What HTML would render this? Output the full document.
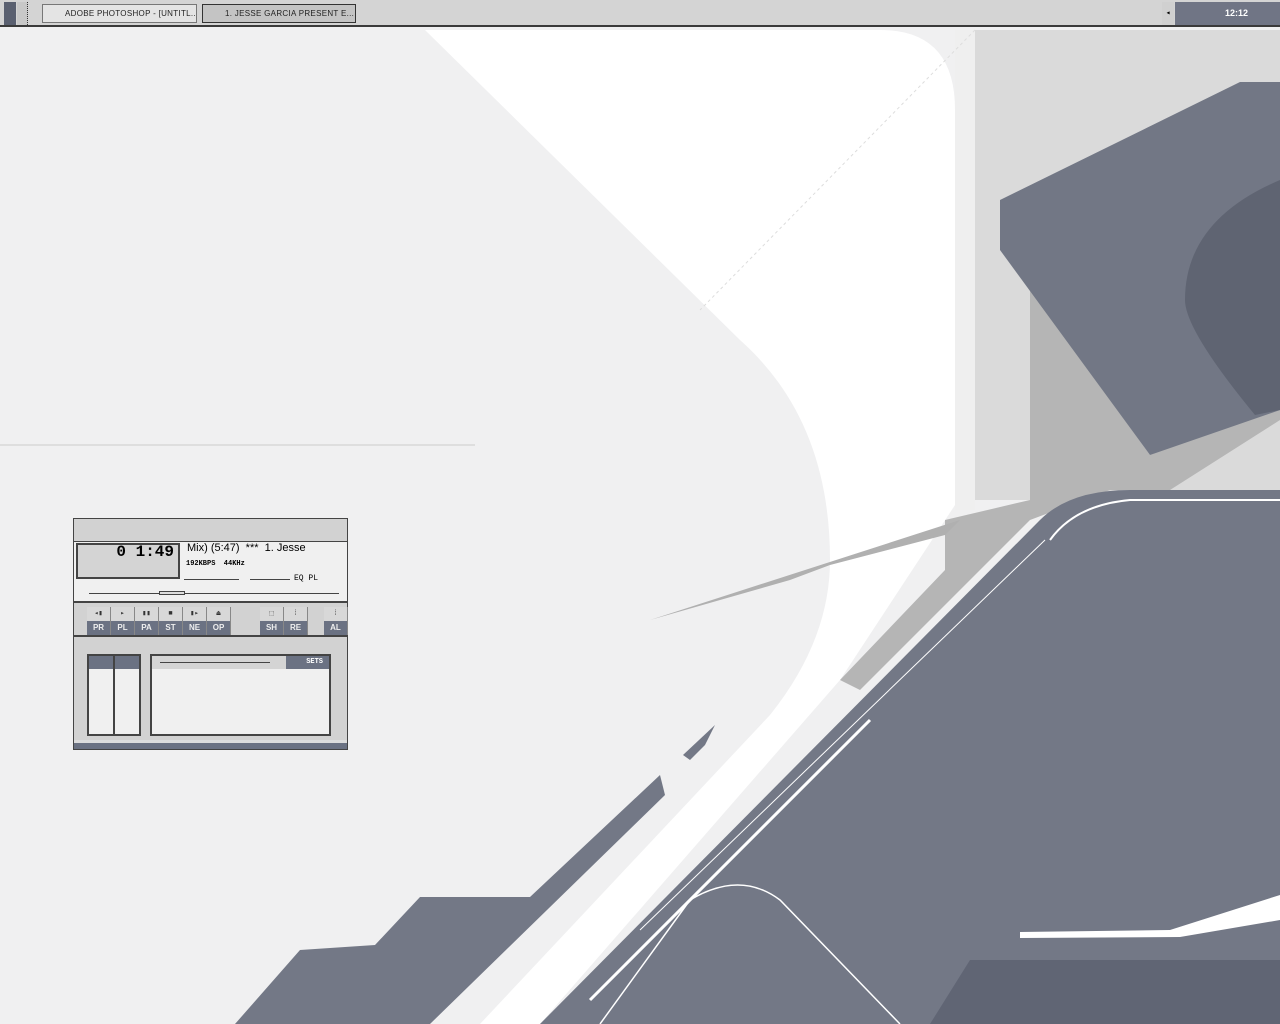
<!DOCTYPE html>
<html><head><style>
*{margin:0;padding:0;box-sizing:border-box}
body{width:1280px;height:1024px;overflow:hidden;background:#f0f0f1;font-family:"Liberation Mono",monospace;position:relative}
#tb{position:absolute;left:0;top:0;width:1280px;height:27px;background:#d4d4d4;border-bottom:2px solid #3a3a3a}
.tbtn{position:absolute;top:4px;height:19px;border:1px solid #777;background:#e4e4e4;font-size:8px;line-height:17px;padding-left:22px;color:#222;letter-spacing:.3px;font-family:"Liberation Sans",sans-serif;white-space:nowrap;overflow:hidden}
#wa{position:absolute;left:73px;top:518px;width:275px;height:232px;background:#d2d2d2;border:1px solid #444}
.d{position:absolute}
.btn{position:absolute;width:24px;height:14px;background:#6b7283;color:#eee;font-size:8px;text-align:center;line-height:14px;font-family:"Liberation Sans",sans-serif;font-weight:bold;border-right:1px solid #888}
.ic{position:absolute;width:24px;height:14px;background:#d8d8d8;border-right:1px solid #888;font-size:7px;text-align:center;line-height:14px;color:#333}
</style></head><body>
<svg width="1280" height="1024" style="position:absolute;left:0;top:0">
<rect x="975" y="30" width="305" height="470" fill="#dadada"/>
<rect x="955" y="30" width="20" height="480" fill="#efefef"/>
<path d="M425,30 L880,30 Q955,30 955,110 L955,505 L840,680 L540,1024 L480,1024 L770,715 Q830,640 830,560 Q830,420 740,340 Z" fill="#fff"/>
<path d="M0,445 L475,445" stroke="#ccc" stroke-width="1"/>
<path d="M1015,270 L1030,280 L1030,500 L945,520 L945,570 L840,680 L860,690 L1030,520 L1110,490 L1170,490 L1280,420 L1280,400 L1150,455 L1060,330 Z" fill="#b5b5b5"/>
<path d="M650,620 L960,520 L945,535 L830,565 L790,580 Z" fill="#b0b0b0"/>
<path d="M1000,200 L1240,82 L1280,82 L1280,410 L1150,455 L1000,250 Z" fill="#727785"/>
<path d="M1185,300 Q1185,220 1280,180 L1280,410 L1255,415 Q1185,330 1185,300 Z" fill="#5f6472"/>
<path d="M1130,490 L1280,490 L1280,1024 L540,1024 L1040,520 Q1070,490 1130,490 Z" fill="#737886"/>
<path d="M1050,540 Q1075,505 1130,500 L1280,500" stroke="#fff" stroke-width="2" fill="none"/>
<path d="M1045,540 L640,930" stroke="#fff" stroke-width="1" fill="none"/>
<path d="M870,720 L590,1000" stroke="#fff" stroke-width="3" fill="none"/>
<path d="M600,1024 L690,900 Q740,870 780,900 L900,1024" stroke="#fff" stroke-width="1.5" fill="none"/>
<path d="M970,960 L1280,960 L1280,1024 L930,1024 Z" fill="#606574"/>
<path d="M1020,932 L1170,930 L1280,895 L1280,920 L1180,937 L1020,938 Z" fill="#fff"/>
<path d="M235,1024 L300,950 L375,945 L420,897 L530,897 L660,775 L665,795 L430,1024 Z" fill="#737886"/>
<path d="M683,755 L715,725 L705,745 L690,760 Z" fill="#737886"/>
<path d="M975,30 L700,310" stroke="#ddd" stroke-dasharray="3,3"/>
</svg>
<div id="tb">
<div class="d" style="left:4px;top:2px;width:12px;height:23px;background:#5a6070"></div>
<div class="d" style="left:17px;top:2px;width:11px;height:23px;background:#c8c8c8;border-right:1px dotted #333"></div>
<div class="tbtn" style="left:42px;width:155px">ADOBE PHOTOSHOP - [UNTITL...</div>
<div class="tbtn" style="left:202px;width:154px;background:#c4c4c4;border-color:#333">1. JESSE GARCIA PRESENT E...</div>
<div class="d" style="left:1162px;top:2px;width:12px;height:23px;background:#d0d0d0;font-size:8px;line-height:23px;text-align:center">◂</div>
<div class="d" style="left:1175px;top:2px;width:105px;height:23px;background:#707585;color:#fff;font-size:9px;line-height:23px;padding-left:50px;font-family:'Liberation Sans',sans-serif;font-weight:bold">12:12</div>
</div>
<div id="wa">
<div class="d" style="left:0;top:22px;width:273px;height:62px;background:#f0f0f0;border-top:1px solid #444;border-bottom:2px solid #444"></div>
<div class="d" style="left:2px;top:24px;width:104px;height:36px;background:#d4d4d4;border:2px solid #444"></div>
<div class="d" style="left:16px;top:25px;width:88px;height:17px;font-size:16px;font-weight:bold;text-align:right;padding-right:4px;line-height:17px">0 1:49</div>
<div class="d" style="left:113px;top:23px;font-size:11px;font-family:'Liberation Sans',sans-serif">Mix) (5:47) &nbsp;*** &nbsp;1. Jesse</div>
<div class="d" style="left:112px;top:41px;font-size:7px;font-weight:bold">192KBPS &nbsp;44KHz</div>
<div class="d" style="left:110px;top:60px;width:55px;height:1px;background:#444"></div>
<div class="d" style="left:176px;top:60px;width:40px;height:1px;background:#444"></div>
<div class="d" style="left:220px;top:55px;font-size:8px">EQ PL</div>
<div class="d" style="left:15px;top:74px;width:250px;height:1px;background:#444"></div>
<div class="d" style="left:85px;top:72px;width:26px;height:4px;background:#ddd;border:1px solid #444"></div>
<div class="ic" style="left:13px;top:88px">◂▮</div><div class="ic" style="left:37px;top:88px">▸</div><div class="ic" style="left:61px;top:88px">▮▮</div><div class="ic" style="left:85px;top:88px">■</div><div class="ic" style="left:109px;top:88px">▮▸</div><div class="ic" style="left:133px;top:88px">⏏</div>
<div class="ic" style="left:186px;top:88px">⬚</div><div class="ic" style="left:210px;top:88px">⁞</div><div class="ic" style="left:250px;top:88px">⁞</div>
<div class="btn" style="left:13px;top:102px">PR</div><div class="btn" style="left:37px;top:102px">PL</div><div class="btn" style="left:61px;top:102px">PA</div><div class="btn" style="left:85px;top:102px">ST</div><div class="btn" style="left:109px;top:102px">NE</div><div class="btn" style="left:133px;top:102px">OP</div>
<div class="btn" style="left:186px;top:102px">SH</div><div class="btn" style="left:210px;top:102px">RE</div><div class="btn" style="left:250px;top:102px">AL</div>
<div class="d" style="left:0;top:116px;width:273px;height:2px;background:#444"></div>
<div class="d" style="left:13px;top:135px;width:54px;height:82px;background:#f0f0f0;border:2px solid #444"></div>
<div class="d" style="left:15px;top:137px;width:50px;height:13px;background:#6b7283"></div>
<div class="d" style="left:39px;top:137px;width:2px;height:78px;background:#444"></div>
<div class="d" style="left:76px;top:135px;width:181px;height:82px;background:#f0f0f0;border:2px solid #444"></div>
<div class="d" style="left:78px;top:137px;width:134px;height:13px;background:#d4d4d4"></div>
<div class="d" style="left:86px;top:143px;width:110px;height:1px;background:#444"></div>
<div class="d" style="left:212px;top:137px;width:43px;height:13px;background:#6b7283;color:#fff;font-size:7px;line-height:13px;text-align:right;padding-right:6px;font-weight:bold">SETS</div>
<div class="d" style="left:0;top:221px;width:273px;height:9px;background:#6b7283;border-top:3px solid #ddd"></div>
</div>
</body></html>
